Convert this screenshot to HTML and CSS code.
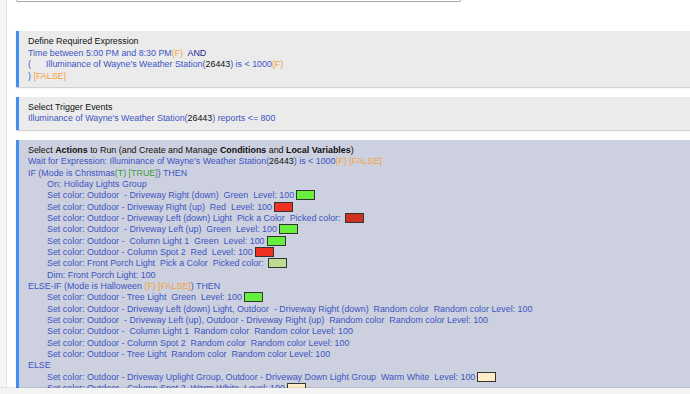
FILE: index.html
```html
<!DOCTYPE html>
<html>
<head>
<meta charset="utf-8">
<link rel="stylesheet" href="styles.css">
</head>
<body>
<div class="page">
  <div class="rail"></div>
  <main class="main">
    <div class="topbox"></div>

    <section class="panel">
      <div class="ln head">Define Required Expression</div>
      <div class="ln">Time between 5:00 PM and 8:30 PM<span class="f">(F)</span>  <span class="and">AND</span></div>
      <div class="ln">(<span class="gap"></span>Illuminance of Wayne's Weather Station(<span class="k">26443</span>) is &lt; 1000<span class="f">(F)</span></div>
      <div class="ln">) <span class="f">[FALSE]</span></div>
    </section>

    <section class="panel">
      <div class="ln head">Select Trigger Events</div>
      <div class="ln">Illuminance of Wayne's Weather Station(<span class="k">26443</span>) reports &lt;= 800</div>
    </section>

    <section class="panel actions">
      <div class="ln head">Select <b>Actions</b> to Run (and Create and Manage <b>Conditions</b> and <b>Local Variables</b>)</div>
      <div class="ln">Wait for Expression: Illuminance of Wayne's Weather Station(<span class="k">26443</span>) is &lt; 1000<span class="f">(F) [FALSE]</span></div>
      <div class="ln">IF (Mode is Christmas<span class="t">(T) [TRUE]</span>) THEN</div>
      <div class="ln in">On: Holiday Lights Group</div>
      <div class="ln in">Set color: Outdoor  - Driveway Right (down)  Green  Level: 100<span class="sw green"></span></div>
      <div class="ln in">Set color: Outdoor - Driveway Right (up)  Red  Level: 100<span class="sw red"></span></div>
      <div class="ln in">Set color: Outdoor - Driveway Left (down) Light  Pick a Color  Picked color: <span class="sw picked"></span></div>
      <div class="ln in">Set color: Outdoor  - Driveway Left (up)  Green  Level: 100<span class="sw green"></span></div>
      <div class="ln in">Set color: Outdoor -  Column Light 1  Green  Level: 100<span class="sw green"></span></div>
      <div class="ln in">Set color: Outdoor - Column Spot 2  Red  Level: 100<span class="sw red"></span></div>
      <div class="ln in">Set color: Front Porch Light  Pick a Color  Picked color: <span class="sw pale"></span></div>
      <div class="ln in">Dim: Front Porch Light: 100</div>
      <div class="ln">ELSE-IF (Mode is Halloween <span class="f">(F) [FALSE]</span>) THEN</div>
      <div class="ln in">Set color: Outdoor - Tree Light  Green  Level: 100<span class="sw green"></span></div>
      <div class="ln in">Set color: Outdoor - Driveway Left (down) Light, Outdoor  - Driveway Right (down)  Random color  Random color Level: 100</div>
      <div class="ln in">Set color: Outdoor  - Driveway Left (up), Outdoor - Driveway Right (up)  Random color  Random color Level: 100</div>
      <div class="ln in">Set color: Outdoor -  Column Light 1  Random color  Random color Level: 100</div>
      <div class="ln in">Set color: Outdoor - Column Spot 2  Random color  Random color Level: 100</div>
      <div class="ln in">Set color: Outdoor - Tree Light  Random color  Random color Level: 100</div>
      <div class="ln">ELSE</div>
      <div class="ln in">Set color: Outdoor - Driveway Uplight Group, Outdoor - Driveway Down Light Group  Warm White  Level: 100<span class="sw warm"></span></div>
      <div class="ln in">Set color: Outdoor - Column Spot 2  Warm White  Level: 100<span class="sw warm"></span></div>
    </section>
  </main>
</div>
<div class="bottombar"></div>
</body>
</html>
```
FILE: styles.css
```css
html, body {
  margin: 0;
  padding: 0;
  background: #ffffff;
  overflow: hidden;
}
body {
  font-family: "Liberation Sans", Arial, sans-serif;
  font-size: 8.9px;
  color: #3b55c4;
}
.page {
  display: flex;
  min-height: 394px;
}
.rail {
  width: 6px;
  flex: none;
  background: #f6f6f6;
  border-right: 1px solid #e4e4e4;
}
.main {
  flex: 1;
  padding-left: 9px;
  min-width: 0;
}
.topbox {
  width: 443px;
  height: 1px;
  border: 1px solid #a8a8a8;
  border-top: none;
  border-radius: 0 0 2px 2px;
}
.panel {
  background: #ebebeb;
  border-left: 3px solid #3f8ef0;
  padding: 5px 0 4.5px 9px;
  margin-top: 9.5px;
  box-shadow: 0 1px 1px rgba(0, 0, 0, 0.18);
}
.panel:first-of-type {
  margin-top: 29px;
}
.ln {
  white-space: pre;
  line-height: 11.7px;
  height: 11.7px;
}
.actions {
  background: #cdd0de;
  margin-top: 10px;
  padding-top: 5.3px;
}
.actions .ln {
  line-height: 11.35px;
  height: 11.35px;
}
.head {
  color: #111111;
}
.head b {
  font-weight: bold;
}
.k {
  color: #111111;
}
.f {
  color: #f2a23c;
}
.t {
  color: #3d9b3a;
}
.and {
  color: #1c2396;
}
.gap {
  display: inline-block;
  width: 15px;
}
.in {
  padding-left: 19px;
}
.sw {
  display: inline-block;
  width: 17px;
  height: 8px;
  border: 1px solid #333333;
  margin-left: 2px;
  vertical-align: -2px;
}
.green { background: #66ee3f; }
.red { background: #ee3320; }
.picked { background: #cf3320; }
.pale { background: #bddd95; }
.warm { background: #fdeec9; }
.bottombar {
  position: fixed;
  left: 0;
  right: 0;
  bottom: 0;
  height: 6px;
  background: #f3f3f3;
  box-shadow: 0 -1px 1px rgba(0, 0, 0, 0.08);
}
```
